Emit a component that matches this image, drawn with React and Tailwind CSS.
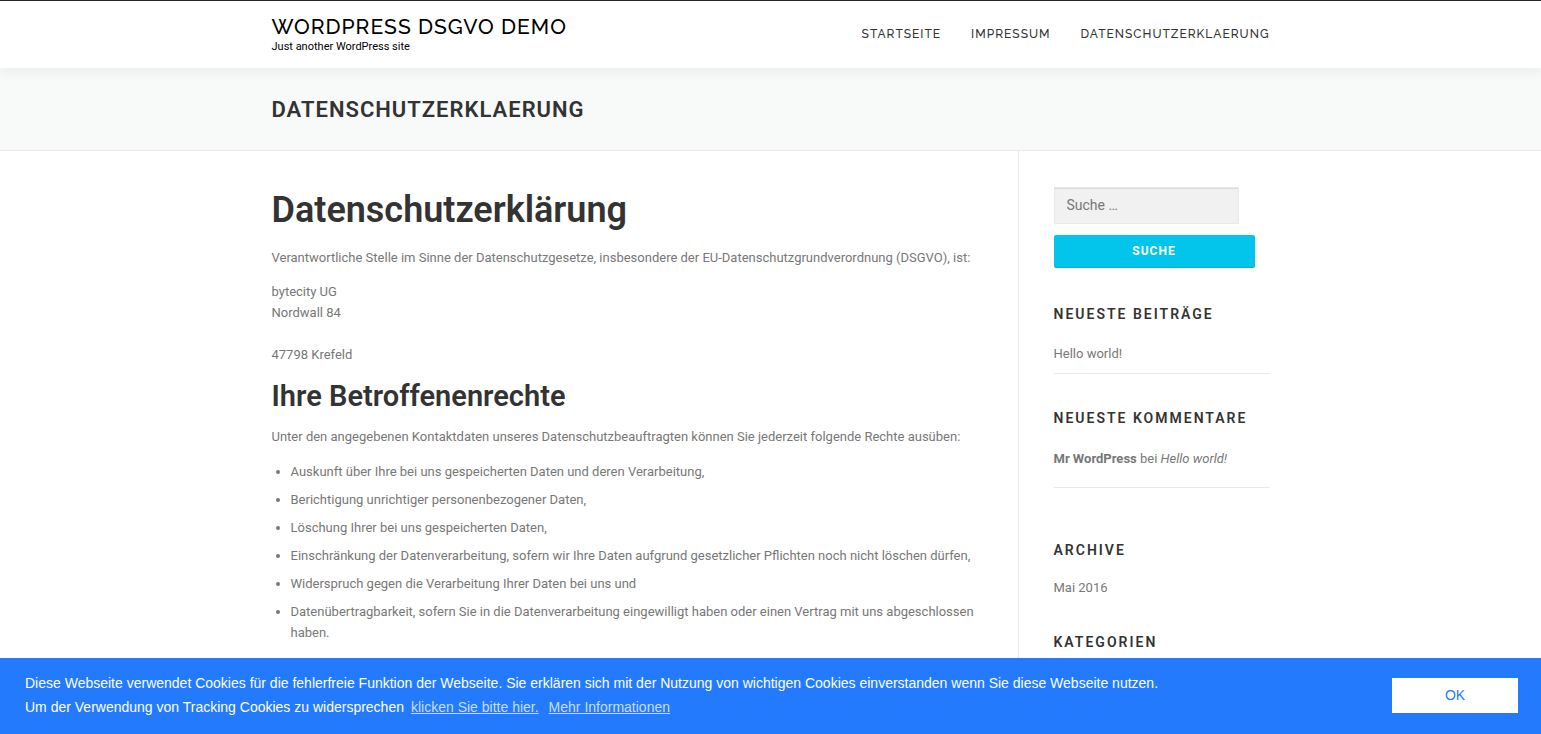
const navItems = ["Startseite", "Impressum", "Datenschutzerklaerung"];

const rights = [
  "Auskunft über Ihre bei uns gespeicherten Daten und deren Verarbeitung,",
  "Berichtigung unrichtiger personenbezogener Daten,",
  "Löschung Ihrer bei uns gespeicherten Daten,",
  "Einschränkung der Datenverarbeitung, sofern wir Ihre Daten aufgrund gesetzlicher Pflichten noch nicht löschen dürfen,",
  "Widerspruch gegen die Verarbeitung Ihrer Daten bei uns und",
  "Datenübertragbarkeit, sofern Sie in die Datenverarbeitung eingewilligt haben oder einen Vertrag mit uns abgeschlossen haben.",
];

function Header() {
  return (
    <header className="relative border-t border-[#23282d] bg-white shadow-[0_5px_10px_rgba(50,50,50,0.06)]">
      <div className="mx-auto flex h-[67px] max-w-[998px] items-center justify-between">
        <div>
          <a href="#" className="block font-[Raleway,Lato,sans-serif] text-[21px] leading-6 font-medium tracking-[1px] text-black uppercase">
            WordPress DSGVO Demo
          </a>
          <p className="text-[11px] leading-4 text-black">Just another WordPress site</p>
        </div>
        <nav className="flex gap-[30px] font-[Raleway,Lato,sans-serif] text-[12px] font-medium tracking-[1px] text-[#333333] uppercase">
          {navItems.map((item) => (
            <a key={item} href="#">{item}</a>
          ))}
        </nav>
      </div>
    </header>
  );
}

function Article() {
  return (
    <main className="min-w-0 flex-1 border-r border-[#e9e9e9] pt-9 pr-9">
      <h1 className="mb-[14px] text-[36px] leading-[46px] font-semibold text-[#333333]">Datenschutzerklärung</h1>
      <p className="mb-[13px]">
        Verantwortliche Stelle im Sinne der Datenschutzgesetze, insbesondere der EU-Datenschutzgrundverordnung (DSGVO), ist:
      </p>
      <p className="mb-[13px]">
        bytecity UG<br />
        Nordwall 84<br />
        <br />
        47798 Krefeld
      </p>
      <h2 className="mb-3 text-[29px] leading-9 font-semibold text-[#333333]">Ihre Betroffenenrechte</h2>
      <p className="mb-[14px]">
        Unter den angegebenen Kontaktdaten unseres Datenschutzbeauftragten können Sie jederzeit folgende Rechte ausüben:
      </p>
      <ul className="list-disc space-y-[7px] pl-[19px]">
        {rights.map((right) => (
          <li key={right}>{right}</li>
        ))}
      </ul>
    </main>
  );
}

function WidgetTitle({ children }) {
  return (
    <h2 className="text-[14px] leading-5 font-semibold tracking-[2px] text-[#333333] uppercase">{children}</h2>
  );
}

function Sidebar() {
  return (
    <aside className="w-[251px] shrink-0 pt-9 pl-[35px]">
      <form role="search" onSubmit={(event) => event.preventDefault()}>
        <input
          type="search"
          aria-label="Suche nach:"
          placeholder="Suche …"
          className="block h-[37px] w-[185px] border border-[#e9e9e9] bg-[#f1f1f1] px-3 pb-[2px] text-[14px] shadow-[inset_0_1px_1px_rgba(0,0,0,0.1)] placeholder:text-[#777777]"
        />
        <button
          type="submit"
          className="mt-[11px] block h-[33px] w-[201px] rounded-[2px] bg-[#03c4eb] text-[12px] font-bold tracking-[1px] text-white uppercase shadow-[inset_0_-1px_0_rgba(0,0,0,0.1)]"
        >
          Suche
        </button>
      </form>
      <section className="mt-9">
        <WidgetTitle>Neueste Beiträge</WidgetTitle>
        <ul className="mt-[19px] border-b border-[#e9e9e9] pb-[9px]">
          <li><a href="#">Hello world!</a></li>
        </ul>
      </section>
      <section className="mt-[34px]">
        <WidgetTitle>Neueste Kommentare</WidgetTitle>
        <ul className="mt-5 border-b border-[#e9e9e9] pb-[18px]">
          <li><a href="#" className="font-bold">Mr WordPress</a> bei <a href="#" className="italic">Hello world!</a></li>
        </ul>
      </section>
      <section className="mt-[52px]">
        <WidgetTitle>Archive</WidgetTitle>
        <ul className="mt-[17px]">
          <li><a href="#">Mai 2016</a></li>
        </ul>
      </section>
      <section className="mt-[34px] pb-20">
        <WidgetTitle>Kategorien</WidgetTitle>
      </section>
    </aside>
  );
}

function CookieBanner() {
  return (
    <div
      role="region"
      aria-label="Cookies"
      className="fixed inset-x-0 bottom-0 flex items-center justify-between gap-6 bg-[#237afc] pt-[13px] pb-[15px] pr-[23px] pl-[25px] font-['Liberation_Sans',Arial,sans-serif] text-[14px] leading-6 text-white"
    >
      <p>
        Diese Webseite verwendet Cookies für die fehlerfreie Funktion der Webseite. Sie erklären sich mit der Nutzung von wichtigen Cookies einverstanden wenn Sie diese Webseite nutzen.
        <br />
        Um der Verwendung von Tracking Cookies zu widersprechen
        <a href="#" className="ml-[7px] text-[#c8deff] underline">klicken Sie bitte hier.</a>
        <a href="#" className="ml-[10px] text-[#c8deff] underline">Mehr Informationen</a>
      </p>
      <button type="button" className="h-[35px] w-[126px] shrink-0 bg-white text-[#237afc]">OK</button>
    </div>
  );
}

export default function App() {
  return (
    <div className="flex min-h-screen flex-col bg-white font-[Roboto,sans-serif] text-[13px] leading-[21px] text-[#777777]">
      <Header />
      <div className="border-b border-[#e9e9e9] bg-[#f8f9f9] pt-[27px] pb-[25px]">
        <div className="mx-auto max-w-[998px]">
          <h1 className="text-[22px] leading-[30px] font-semibold tracking-[1px] text-[#333333] uppercase">Datenschutzerklaerung</h1>
        </div>
      </div>
      <div className="mx-auto flex w-full max-w-[998px] flex-1">
        <Article />
        <Sidebar />
      </div>
      <CookieBanner />
    </div>
  );
}
